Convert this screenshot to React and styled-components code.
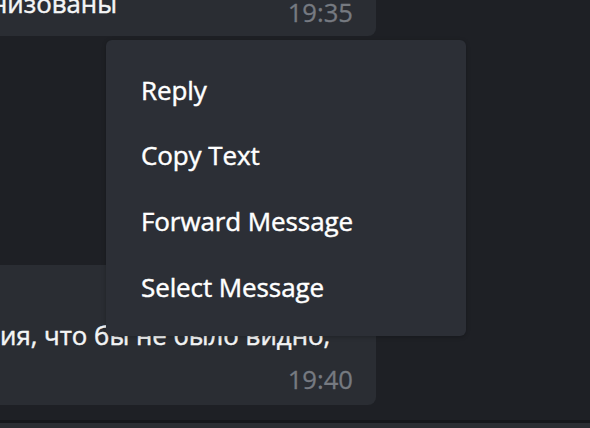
import React from 'react'
import styled, { createGlobalStyle } from 'styled-components'

const GlobalStyle = createGlobalStyle`
  html, body {
    margin: 0;
    padding: 0;
    background: #1e2025;
  }
  body {
    font-family: "Open Sans", "Noto Sans", "DejaVu Sans", sans-serif;
    -webkit-font-smoothing: antialiased;
  }
`

const menuItems = ['Reply', 'Copy Text', 'Forward Message', 'Select Message']

function App() {
  return (
    <Page>
      <GlobalStyle />
      <ChatArea>
        <TopBubble>
          <MessageText $shift={-12} $indent={-9}>низованы</MessageText>
          <Time $shift={-2}>19:35</Time>
        </TopBubble>
        <Spacer />
        <BottomBubble>
          <MessageText>ия, что бы не было видно,</MessageText>
          <Time $end>19:40</Time>
        </BottomBubble>
        <ContextMenu>
          {menuItems.map(item => (
            <MenuItem key={item}>{item}</MenuItem>
          ))}
        </ContextMenu>
      </ChatArea>
      <Divider />
      <InputBar />
    </Page>
  )
}

export default App

const Page = styled.div`
  width: 590px;
  height: 428px;
  display: flex;
  flex-direction: column;
  overflow: hidden;
  background: #1e2025;
`

const ChatArea = styled.div`
  position: relative;
  height: 420px;
  display: flex;
  flex-direction: column;
  flex-shrink: 0;
`

const Bubble = styled.div`
  width: 376px;
  box-sizing: border-box;
  background: #2a2d33;
  padding-right: 23px;
`

const TopBubble = styled(Bubble)`
  height: 36px;
  display: flex;
  justify-content: space-between;
  align-items: flex-start;
  border-bottom-right-radius: 8px;
  overflow: hidden;
`

const BottomBubble = styled(Bubble)`
  height: 140px;
  display: flex;
  flex-direction: column;
  padding-top: 55px;
  border-top-right-radius: 8px;
  border-bottom-right-radius: 8px;
`

const Spacer = styled.div`
  height: 229px;
  flex-shrink: 0;
`

const MessageText = styled.div`
  font-size: 25.8px;
  line-height: 30px;
  color: #f4f5f6;
  -webkit-text-stroke: 0.45px currentColor;
  white-space: nowrap;
  margin-top: ${p => p.$shift || 0}px;
  margin-left: ${p => p.$indent || 0}px;
`

const Time = styled.div`
  font-size: 25.6px;
  line-height: 30px;
  color: #767a81;
  -webkit-text-stroke: 0.3px currentColor;
  margin-top: ${p => p.$shift || 0}px;
  ${p => p.$end && `
    align-self: flex-end;
    margin-top: 15px;
  `}
`

const ContextMenu = styled.div`
  position: absolute;
  left: 106px;
  top: 40px;
  width: 360px;
  height: 296px;
  box-sizing: border-box;
  padding: 17px 0 0 35px;
  background: #2c2f36;
  border-radius: 6px;
  box-shadow: 0 1px 4px rgba(0, 0, 0, 0.25);
  display: flex;
  flex-direction: column;
`

const MenuItem = styled.div`
  height: 65.6px;
  flex-shrink: 0;
  display: flex;
  align-items: center;
  font-size: 26px;
  color: #ffffff;
  -webkit-text-stroke: 0.45px currentColor;
  letter-spacing: -0.1px;
`

const Divider = styled.div`
  height: 3px;
  background: #15171b;
  flex-shrink: 0;
`

const InputBar = styled.div`
  flex: 1;
  background: #2a2d32;
`
